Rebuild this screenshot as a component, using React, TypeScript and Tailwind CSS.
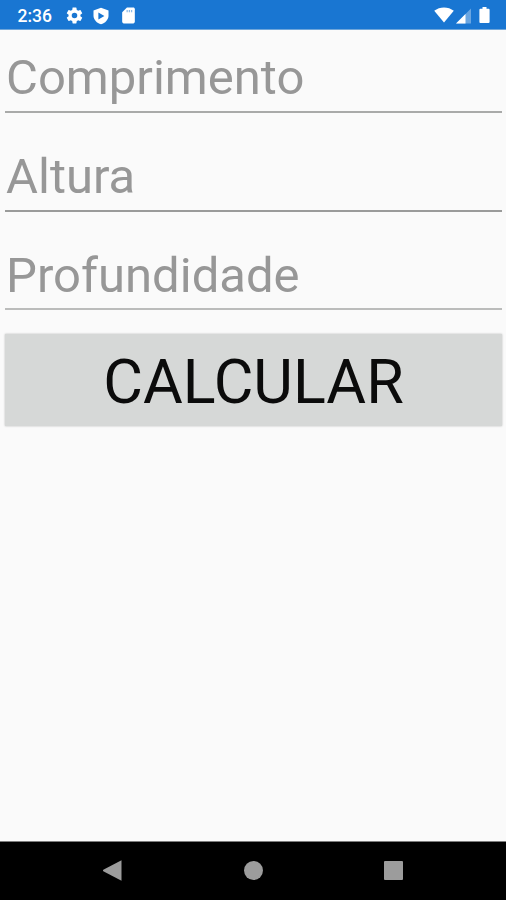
interface Field {
  id: string
  hint: string
  hintClass: string
  lineClass: string
}

const FIELDS: Field[] = [
  { id: 'length', hint: 'Comprimento', hintClass: 'h-[62px]', lineClass: 'mb-[35px] bg-[#a9aaa9]' },
  { id: 'height', hint: 'Altura', hintClass: 'h-[62px]', lineClass: 'mb-[35px] bg-[#9a9b9a]' },
  { id: 'depth', hint: 'Profundidade', hintClass: 'h-[61px]', lineClass: 'mb-[24px] bg-[#bbbcbb]' },
]

function StatusBar() {
  return (
    <header className="flex h-[30px] shrink-0 items-center border-b border-[#6fa6da] bg-[#1976d2] pl-[17.5px] pr-[16px] pt-[2px] text-white">
      <span className="w-[47px] text-[17.5px] leading-[28px] font-medium">2:36</span>
      {/* Notification icons */}
      <svg className="size-[19px]" viewBox="0 0 24 24" fill="currentColor">
        <path d="M19.43 12.98c.04-.32.07-.64.07-.98s-.03-.66-.07-.98l2.11-1.65c.19-.15.24-.42.12-.64l-2-3.46c-.12-.22-.39-.3-.61-.22l-2.49 1c-.52-.4-1.08-.73-1.69-.98l-.38-2.65A.49.49 0 0 0 14 2h-4c-.25 0-.46.18-.49.42l-.38 2.65c-.61.25-1.17.59-1.69.98l-2.49-1c-.23-.09-.49 0-.61.22l-2 3.46c-.13.22-.07.49.12.64l2.11 1.65c-.04.32-.07.65-.07.98s.03.66.07.98l-2.11 1.65c-.19.15-.24.42-.12.64l2 3.46c.12.22.39.3.61.22l2.49-1c.52.4 1.08.73 1.69.98l.38 2.65c.03.24.24.42.49.42h4c.25 0 .46-.18.49-.42l.38-2.65c.61-.25 1.17-.59 1.69-.98l2.49 1c.23.09.49 0 .61-.22l2-3.46c.12-.22.07-.49-.12-.64l-2.11-1.65zM12 15.5a3.5 3.5 0 1 1 0-7 3.5 3.5 0 0 1 0 7z" />
      </svg>
      <svg className="ml-[8.5px] size-[18px]" viewBox="0 0 24 24">
        <path fill="currentColor" d="M12 1 2 4.5v7c0 5.2 4.5 9.9 10 11.5 5.5-1.6 10-6.3 10-11.5v-7z" />
        <path fill="#1976d2" d="M8.5 7.3v9.4l8-4.7z" />
      </svg>
      <svg className="ml-[9px] size-[19px]" viewBox="0 0 24 24" fill="currentColor">
        <path d="M18 2h-8L4 8v12c0 1.1.9 2 2 2h12c1.1 0 2-.9 2-2V4c0-1.1-.9-2-2-2z" />
        <path fill="#1976d2" opacity=".5" d="M9.5 5h1.6v3H9.5zM12.3 5h1.6v3h-1.6zM15.1 5h1.6v3h-1.6z" />
      </svg>
      {/* Connectivity */}
      <svg className="ml-auto h-[16px] w-[20px] -translate-y-px" viewBox="0 0 20 16" fill="currentColor">
        <path d="M.2 3.8C3 1.5 6.5.4 10 .4s7 1.1 9.8 3.4L10 15.5z" />
      </svg>
      <svg className="ml-[2px] h-[16px] w-[15px]" viewBox="0 0 15 16" fill="currentColor">
        <path opacity=".35" d="M15 .5v15H0z" />
        <path d="M9.5 6v9.500H0z" />
      </svg>
      <svg className="ml-[8px] h-[18px] w-[11px] -translate-y-px" viewBox="0 0 11 18" fill="currentColor">
        <path d="M3.5 1h4v1.8h2.2c.5 0 .9.4.9.9v12.4c0 .5-.4.9-.9.9H1.3a.9.9 0 0 1-.9-.9V3.700c0-.5.4-.9.9-.9h2.200z" />
      </svg>
    </header>
  )
}

function NavBar() {
  return (
    <nav className="flex h-[59px] shrink-0 items-center border-t border-[#7d7d7d] bg-black px-[103px] pb-px text-[#9c9c9c]">
      <svg className="h-[21px] w-[19px]" viewBox="0 0 19 21" fill="currentColor">
        <path d="M18.5.3v20.4L.3 11.200c-.5-.3-.5-1.100 0-1.400z" />
      </svg>
      <span className="ml-[122px] size-[19px] rounded-full bg-[#9c9c9c]" />
      <span className="ml-[121px] size-[19px] shrink-0 rounded-[1px] bg-[#9c9c9c]" />
    </nav>
  )
}

export default function App() {
  return (
    <div className="flex h-screen w-full flex-col overflow-hidden bg-[#fafafa] font-['Roboto',sans-serif]">
      <StatusBar />

      <main className="flex flex-1 flex-col pl-[5px] pr-[4px] pt-[19px]">
        {FIELDS.map(f => (
          <div key={f.id} className="flex shrink-0 flex-col">
            <div className={`flex items-center ml-px text-[49px] leading-[54px] whitespace-nowrap text-[#979797] pb-[4px] ${f.hintClass}`}>
              {f.hint}
            </div>
            <div className={`h-[2px] ${f.lineClass}`} />
          </div>
        ))}

        <button className="h-[92px] shrink-0 bg-[#d6d8d7] pt-[4px] text-center text-[61px] leading-[88px] text-[#0b0b0b] shadow-[0_0_2px_rgba(0,0,0,0.25)]">
          CALCULAR
        </button>
      </main>

      <NavBar />
    </div>
  )
}
